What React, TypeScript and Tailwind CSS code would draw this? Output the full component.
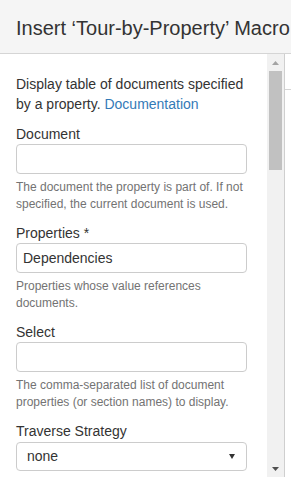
export default function App() {
  return (
    <div className="w-[291px] h-[477px] overflow-hidden flex flex-col bg-white text-[#333] font-['Liberation_Sans',Arial,sans-serif]">
      <div className="h-[54px] shrink-0 bg-[#f5f5f5] border-b border-[#d5d5d5] flex items-center pl-4 whitespace-nowrap overflow-hidden">
        <h1 className="text-[20px] leading-none mt-[2px]">Insert ‘Tour-by-Property’ Macro</h1>
      </div>
      <div className="flex flex-1 min-h-0">
        <div className="w-[267px] shrink-0 overflow-hidden pl-4 pr-5 pt-5">
          <p className="text-[14px] leading-5 mb-[10px]">
            Display table of documents specified by a property.{" "}
            <a className="text-[#337ab7]">Documentation</a>
          </p>
          <Field label="Document" help="The document the property is part of. If not specified, the current document is used." />
          <Field label="Properties *" value="Dependencies" help="Properties whose value references documents." />
          <Field label="Select" help="The comma-separated list of document properties (or section names) to display." />
          <div className="text-[14px] leading-5">Traverse Strategy</div>
          <div className="h-[29px] mt-px border border-[#ccc] rounded flex items-center justify-between pl-[10px] pr-[11px] text-[14px]">
            <span>none</span>
            <svg width="6" height="5" viewBox="0 0 6 5">
              <path d="M0 0h6L3 5z" fill="#333" />
            </svg>
          </div>
        </div>
        <div className="w-[17px] shrink-0 bg-[#f1f1f1] flex flex-col items-center">
          <div className="h-[17px] flex items-center justify-center">
            <svg width="7" height="4" viewBox="0 0 7 4">
              <path d="M0 4h7L3.5 0z" fill="#a3a3a3" />
            </svg>
          </div>
          <div className="w-[13px] h-[99px] bg-[#c1c1c1]" />
          <div className="flex-1" />
          <div className="h-[17px] flex items-center justify-center">
            <svg width="7" height="4" viewBox="0 0 7 4">
              <path d="M0 0h7L3.5 4z" fill="#505050" />
            </svg>
          </div>
        </div>
        <div className="w-px shrink-0 bg-[#cfcfcf]" />
        <div className="flex-1">
          <div className="h-[36px] border-b border-[#d5d5d5]" />
        </div>
      </div>
    </div>
  );
}

function Field({ label, value, help }: { label: string; value?: string; help: string }) {
  return (
    <div className="mb-[10px]">
      <div className="text-[14px] leading-5">{label}</div>
      <div className="h-[30px] border border-[#ccc] rounded flex items-center px-[6px] text-[14px]">
        {value}
      </div>
      <p className="mt-[5px] text-[12px] leading-[17px] text-[#737373]">{help}</p>
    </div>
  );
}
